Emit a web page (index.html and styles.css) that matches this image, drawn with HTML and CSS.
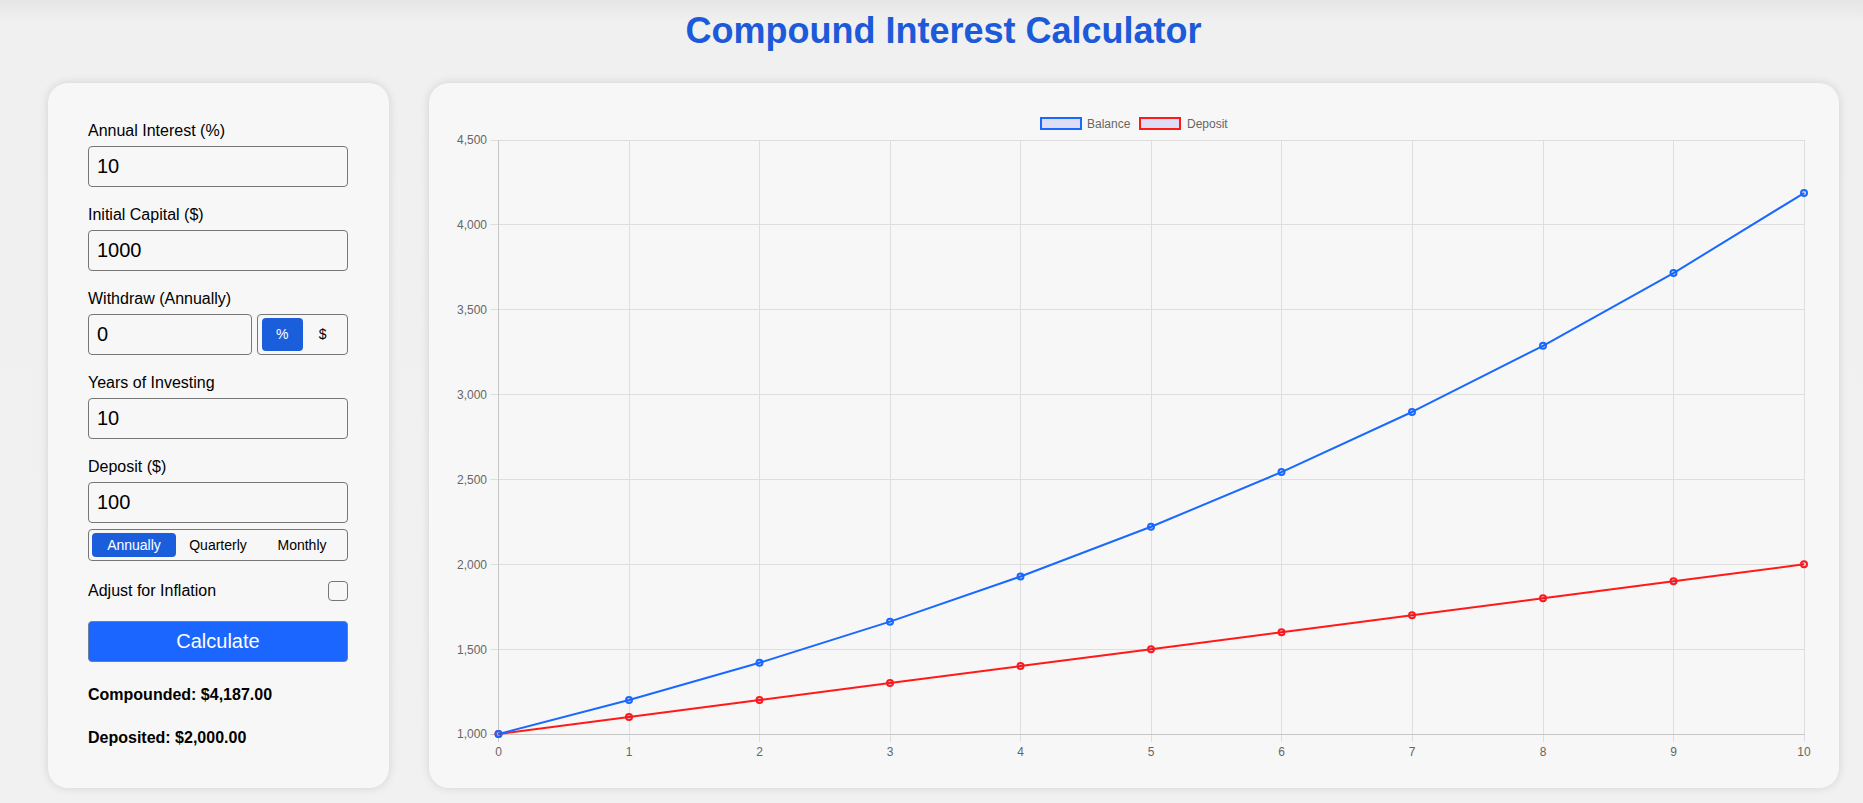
FILE: index.html
```html
<!DOCTYPE html>
<html lang="en">
<head>
<meta charset="utf-8">
<title>Compound Interest Calculator</title>
<link rel="stylesheet" href="styles.css">
</head>
<body>
<div class="page">
  <h1 class="title">Compound Interest Calculator</h1>
  <div class="cards">
    <div class="card form-card">
      <div class="field">
        <label class="label">Annual Interest (%)</label>
        <input class="input" type="text" value="10">
      </div>
      <div class="field">
        <label class="label">Initial Capital ($)</label>
        <input class="input" type="text" value="1000">
      </div>
      <div class="field">
        <label class="label">Withdraw (Annually)</label>
        <div class="withdraw-row">
          <input class="input grow" type="text" value="0">
          <div class="toggle toggle-small">
            <button class="tbtn active">%</button>
            <button class="tbtn">$</button>
          </div>
        </div>
      </div>
      <div class="field">
        <label class="label">Years of Investing</label>
        <input class="input" type="text" value="10">
      </div>
      <div class="field last">
        <label class="label">Deposit ($)</label>
        <input class="input" type="text" value="100">
        <div class="toggle toggle-freq">
          <button class="tbtn active">Annually</button>
          <button class="tbtn">Quarterly</button>
          <button class="tbtn">Monthly</button>
        </div>
      </div>
      <div class="check-row">
        <span class="label-inline">Adjust for Inflation</span>
        <input class="checkbox" type="checkbox">
      </div>
      <button class="calc">Calculate</button>
      <p class="result first">Compounded: $4,187.00</p>
      <p class="result second">Deposited: $2,000.00</p>
    </div>
    <div class="card chart-card">
      <svg class="chart" width="1370" height="665" viewBox="0 0 1370 665">
        <!-- legend -->
        <rect x="592" y="15" width="40" height="11" class="legend-box" stroke="rgb(25,105,255)"/>
        <text x="638" y="24.5" class="legend-text">Balance</text>
        <rect x="691" y="15" width="40" height="11" class="legend-box" stroke="rgb(255,25,25)"/>
        <text x="738" y="24.5" class="legend-text">Deposit</text>

        <!-- horizontal grid -->
        <g class="grid">
          <line x1="41" y1="37.5" x2="1356" y2="37.5"/>
          <line x1="41" y1="121.5" x2="1356" y2="121.5"/>
          <line x1="41" y1="206.5" x2="1356" y2="206.5"/>
          <line x1="41" y1="291.5" x2="1356" y2="291.5"/>
          <line x1="41" y1="376.5" x2="1356" y2="376.5"/>
          <line x1="41" y1="461.5" x2="1356" y2="461.5"/>
          <line x1="41" y1="546.5" x2="1356" y2="546.5"/>
        </g>
        <!-- vertical grid -->
        <g class="grid">
          <line x1="180.5" y1="37" x2="180.5" y2="639"/>
          <line x1="310.5" y1="37" x2="310.5" y2="639"/>
          <line x1="441.5" y1="37" x2="441.5" y2="639"/>
          <line x1="571.5" y1="37" x2="571.5" y2="639"/>
          <line x1="702.5" y1="37" x2="702.5" y2="639"/>
          <line x1="832.5" y1="37" x2="832.5" y2="639"/>
          <line x1="963.5" y1="37" x2="963.5" y2="639"/>
          <line x1="1094.5" y1="37" x2="1094.5" y2="639"/>
          <line x1="1224.5" y1="37" x2="1224.5" y2="639"/>
          <line x1="1355.5" y1="37" x2="1355.5" y2="639"/>
        </g>
        <!-- axes -->
        <g class="axis">
          <line x1="49.5" y1="37" x2="49.5" y2="639"/>
          <line x1="41" y1="631.5" x2="1356" y2="631.5"/>
        </g>

        <!-- y labels -->
        <g class="tick-text" text-anchor="end">
          <text x="38" y="41">4,500</text>
          <text x="38" y="125.5">4,000</text>
          <text x="38" y="210.5">3,500</text>
          <text x="38" y="295.5">3,000</text>
          <text x="38" y="380.5">2,500</text>
          <text x="38" y="465.5">2,000</text>
          <text x="38" y="550.5">1,500</text>
          <text x="38" y="635">1,000</text>
        </g>
        <!-- x labels -->
        <g class="tick-text" text-anchor="middle">
          <text x="49.5" y="653">0</text>
          <text x="180" y="653">1</text>
          <text x="310.5" y="653">2</text>
          <text x="441" y="653">3</text>
          <text x="571.5" y="653">4</text>
          <text x="702" y="653">5</text>
          <text x="832.5" y="653">6</text>
          <text x="963" y="653">7</text>
          <text x="1094" y="653">8</text>
          <text x="1224.5" y="653">9</text>
          <text x="1355" y="653">10</text>
        </g>

        <!-- deposit series -->
        <polyline class="series" stroke="rgb(255,25,25)" points="49.5,631 180,614.03 310.5,597.06 441,580.09 571.5,563.11 702,546.14 832.5,529.17 963,512.2 1094,495.23 1224.5,478.26 1355,461.29"/>
        <g class="pts" stroke="rgb(255,25,25)">
          <circle cx="49.5" cy="631" r="3"/>
          <circle cx="180" cy="614.03" r="3"/>
          <circle cx="310.5" cy="597.06" r="3"/>
          <circle cx="441" cy="580.09" r="3"/>
          <circle cx="571.5" cy="563.11" r="3"/>
          <circle cx="702" cy="546.14" r="3"/>
          <circle cx="832.5" cy="529.17" r="3"/>
          <circle cx="963" cy="512.2" r="3"/>
          <circle cx="1094" cy="495.23" r="3"/>
          <circle cx="1224.5" cy="478.26" r="3"/>
          <circle cx="1355" cy="461.29" r="3"/>
        </g>

        <!-- balance series -->
        <polyline class="series" stroke="rgb(25,105,255)" points="49.5,631 180,597.06 310.5,559.72 441,518.65 571.5,473.47 702,423.78 832.5,369.11 963,308.98 1094,242.83 1224.5,170.07 1355,90.04"/>
        <g class="pts" stroke="rgb(25,105,255)">
          <circle cx="49.5" cy="631" r="3"/>
          <circle cx="180" cy="597.06" r="3"/>
          <circle cx="310.5" cy="559.72" r="3"/>
          <circle cx="441" cy="518.65" r="3"/>
          <circle cx="571.5" cy="473.47" r="3"/>
          <circle cx="702" cy="423.78" r="3"/>
          <circle cx="832.5" cy="369.11" r="3"/>
          <circle cx="963" cy="308.98" r="3"/>
          <circle cx="1094" cy="242.83" r="3"/>
          <circle cx="1224.5" cy="170.07" r="3"/>
          <circle cx="1355" cy="90.04" r="3"/>
        </g>
      </svg>
    </div>
  </div>
</div>
</body>
</html>
```

FILE: styles.css
```css
* {
  box-sizing: border-box;
}

html, body {
  margin: 0;
  padding: 0;
}

body {
  background: linear-gradient(#e5e5e5 0px, #f0f0f0 22px, #f1f1f1 100%);
  font-family: "Liberation Sans", Arial, Helvetica, sans-serif;
  color: #000;
  min-height: 803px;
}

.page {
  padding: 10px 24px 15px 48px;
}

.title {
  margin: 0 0 32px 0;
  font-size: 36px;
  line-height: 41px;
  font-weight: bold;
  text-align: center;
  color: #1c5ad9;
}

.cards {
  display: flex;
  gap: 40px;
  align-items: stretch;
}

.card {
  background: #f7f7f7;
  border-radius: 20px;
  box-shadow: 0 0 10px rgba(0, 0, 0, 0.13);
}

.form-card {
  width: 341px;
  flex: none;
  padding: 39px 41px 41px 40px;
  display: flex;
  flex-direction: column;
}

.field {
  display: flex;
  flex-direction: column;
  margin-bottom: 19px;
}

.field.last {
  margin-bottom: 20px;
}

.label {
  display: block;
  font-size: 16px;
  line-height: 18px;
  margin-bottom: 6px;
}

.input {
  width: 100%;
  height: 41px;
  border: 1px solid #767676;
  border-radius: 4px;
  background: #f7f7f7;
  font-family: "Liberation Sans", Arial, sans-serif;
  font-size: 20px;
  color: #000;
  padding: 0 8px;
  outline: none;
}

.withdraw-row {
  display: flex;
  gap: 5px;
}

.input.grow {
  flex: 1;
  width: auto;
  min-width: 0;
}

.toggle {
  display: flex;
  border: 1px solid #767676;
  border-radius: 4px;
  background: #f7f7f7;
}

.toggle-small {
  width: 91px;
  flex: none;
  padding: 3px 4px;
}

.toggle-freq {
  margin-top: 6px;
  padding: 3px;
}

.tbtn {
  flex: 1;
  border: none;
  background: transparent;
  border-radius: 4px;
  font-family: "Liberation Sans", Arial, sans-serif;
  font-size: 14px;
  color: #000;
  padding: 0;
  height: 24px;
  line-height: 24px;
}

.toggle-small .tbtn {
  height: 33px;
  line-height: 33px;
}

.tbtn.active {
  background: #1b5edc;
  color: #fff;
}

.check-row {
  display: flex;
  justify-content: space-between;
  align-items: center;
  height: 20px;
}

.label-inline {
  font-size: 16px;
  line-height: 18px;
}

.checkbox {
  appearance: none;
  -webkit-appearance: none;
  width: 20px;
  height: 20px;
  margin: 0;
  border: 1px solid #767676;
  border-radius: 4px;
  background: #f7f7f7;
}

.calc {
  margin-top: 20px;
  height: 41px;
  width: 100%;
  background: #1a66ff;
  color: #fff;
  border: 1px solid #6a7ea6;
  border-radius: 4px;
  font-family: "Liberation Sans", Arial, sans-serif;
  font-size: 20px;
  padding: 0;
}

.result {
  margin: 0;
  font-size: 16px;
  line-height: 18px;
  font-weight: bold;
}

.result.first {
  margin-top: 24px;
}

.result.second {
  margin-top: 25px;
}

.chart-card {
  flex: 1;
  padding: 20px;
}

.chart {
  display: block;
}

.chart text {
  font-family: "Liberation Sans", Arial, Helvetica, sans-serif;
}

.legend-box {
  fill: rgba(0, 0, 255, 0.1);
  stroke-width: 2;
}

.legend-text {
  font-size: 12px;
  fill: #666;
}

.grid line {
  stroke: #dedede;
  stroke-width: 1;
}

.axis line {
  stroke: #c6c6c6;
  stroke-width: 1;
}

.tick-text text {
  font-size: 12px;
  fill: #666;
}

.series {
  fill: none;
  stroke-width: 2;
  stroke-linejoin: round;
}

.pts circle {
  fill: rgba(0, 0, 255, 0.1);
  stroke-width: 2;
}
```
